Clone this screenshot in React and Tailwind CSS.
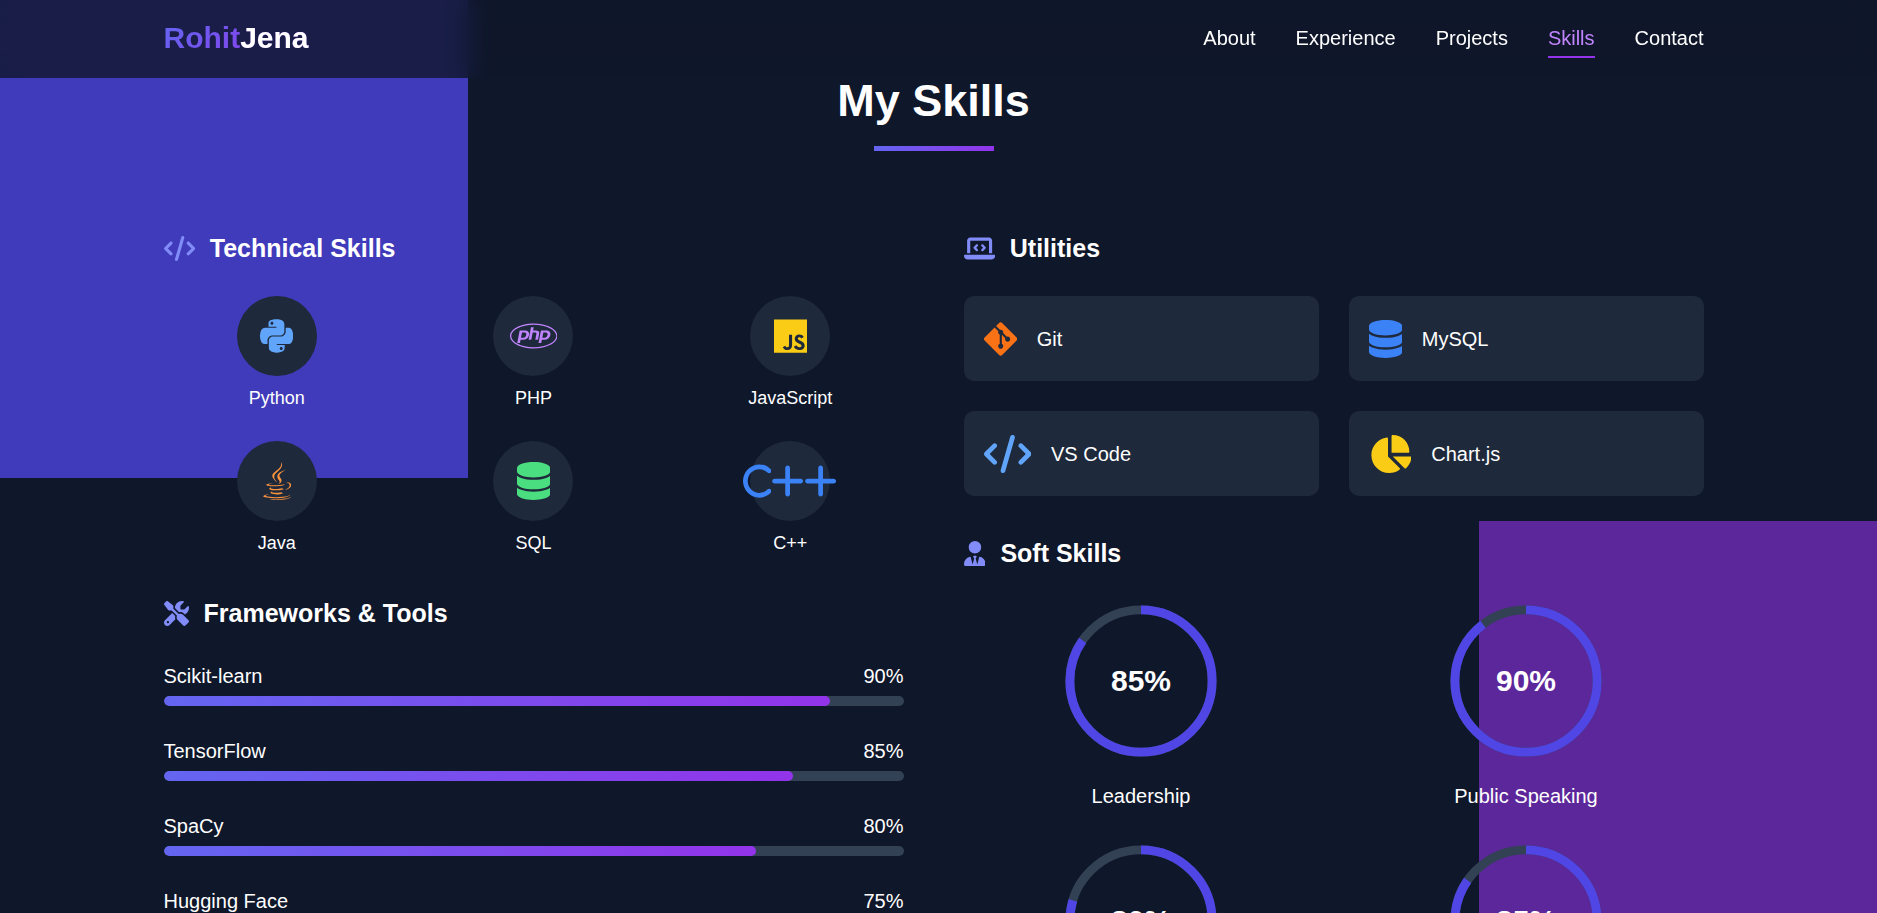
import {
  FaC,
  FaChartPie,
  FaCode,
  FaDatabase,
  FaGitAlt,
  FaJava,
  FaJs,
  FaLaptopCode,
  FaPhp,
  FaPlus,
  FaPython,
  FaScrewdriverWrench,
  FaUserTie,
} from "react-icons/fa6";

const links = ["About", "Experience", "Projects", "Skills", "Contact"];

// Each glyph keeps the proportions of its own view box.
const languages = [
  { name: "Python", icons: [[FaPython, "aspect-[7/8]"]], color: "text-[#60a5fa]" },
  { name: "PHP", icons: [[FaPhp, "aspect-[5/4]"]], color: "text-[#c084fc]" },
  { name: "JavaScript", icons: [[FaJs, "aspect-[7/8]"]], color: "text-[#facc15]" },
  { name: "Java", icons: [[FaJava, "aspect-[3/4]"]], color: "text-[#fb923c]" },
  { name: "SQL", icons: [[FaDatabase, "aspect-[7/8]"]], color: "text-[#4ade80]" },
  {
    name: "C++",
    icons: [
      [FaC, "aspect-[3/4]"],
      [FaPlus, "aspect-[7/8]"],
      [FaPlus, "aspect-[7/8]"],
    ],
    color: "text-[#3b82f6]",
  },
];

const frameworks = [
  { name: "Scikit-learn", value: 90 },
  { name: "TensorFlow", value: 85 },
  { name: "SpaCy", value: 80 },
  { name: "Hugging Face", value: 75 },
];

const utilities = [
  { name: "Git", Icon: FaGitAlt, look: "aspect-[7/8] text-[#f97316]" },
  { name: "MySQL", Icon: FaDatabase, look: "aspect-[7/8] text-[#3b82f6]" },
  { name: "VS Code", Icon: FaCode, look: "aspect-[5/4] text-[#60a5fa]" },
  { name: "Chart.js", Icon: FaChartPie, look: "aspect-[9/8] text-[#facc15]" },
];

const softSkills = [
  { name: "Leadership", value: 85 },
  { name: "Public Speaking", value: 90 },
  { name: "", value: 80 },
  { name: "", value: 85 },
];

function Header() {
  return (
    <header className="fixed inset-x-0 top-0 z-20 bg-[#0f172a]/80 pr-[10px] backdrop-blur-md">
      <nav className="mx-auto flex max-w-[1600px] items-center justify-between px-[30px] pt-[18px] pb-5">
        <a
          href="#home"
          className="bg-[linear-gradient(135deg,#6366f1,#9333ea)] bg-clip-text text-[30px] leading-10 font-bold text-transparent"
        >
          Rohit<span className="text-white">Jena</span>
        </a>
        <ul className="flex gap-10">
          {links.map((link) => (
            <li key={link}>
              <a
                href={`#${link.toLowerCase()}`}
                className={
                  link === "Skills"
                    ? "relative block text-[#c084fc] after:absolute after:inset-x-0 after:-bottom-[5px] after:h-[2px] after:bg-[#9333ea]"
                    : "block"
                }
              >
                {link}
              </a>
            </li>
          ))}
        </ul>
      </nav>
    </header>
  );
}

function GroupTitle({ Icon, shape, children }) {
  return (
    <h3 className="mb-[30px] flex items-center gap-[15px] text-[25px] leading-[35px] font-bold">
      <Icon className={`h-[25px] w-auto shrink-0 text-[#818cf8] ${shape}`} />
      {children}
    </h3>
  );
}

function Language({ name, icons, color }) {
  return (
    <li className="flex flex-col items-center">
      <div className={`mb-[10px] flex size-20 items-center justify-center rounded-full bg-[#1e293b] ${color}`}>
        {icons.map(([Icon, shape], i) => (
          <Icon key={i} className={`h-[38px] w-auto shrink-0 ${shape}`} />
        ))}
      </div>
      <span className="text-[18px] leading-[25px]">{name}</span>
    </li>
  );
}

function Framework({ name, value }) {
  return (
    <li>
      <div className="mb-[5px] flex justify-between">
        <span>{name}</span>
        <span>{value}%</span>
      </div>
      <div className="h-[10px] overflow-hidden rounded-[5px] bg-[#334155]">
        <div
          className="h-full rounded-[5px] bg-[linear-gradient(135deg,#6366f1,#9333ea)]"
          style={{ width: `${value}%` }}
        />
      </div>
    </li>
  );
}

function Utility({ name, Icon, look }) {
  return (
    <li className="flex h-[85px] items-center gap-5 rounded-[10px] bg-[#1e293b] px-5">
      <Icon className={`h-[38px] w-auto shrink-0 ${look}`} />
      <span>{name}</span>
    </li>
  );
}

function Ring({ name, value }) {
  return (
    <li className="flex flex-col items-center">
      <div className="relative size-40">
        <svg viewBox="0 0 36 36" className="size-full -rotate-90" fill="none" strokeWidth="2">
          <circle cx="18" cy="18" r="16" stroke="#334155" />
          <circle cx="18" cy="18" r="16" stroke="#4f46e5" strokeDasharray={`${value} 100.53`} />
        </svg>
        <span className="absolute inset-0 flex items-center justify-center text-[30px] leading-10 font-bold">
          {value}%
        </span>
      </div>
      {name && <span className="mt-5">{name}</span>}
    </li>
  );
}

export default function App() {
  return (
    <div className="relative h-screen overflow-hidden bg-[#0f172a] font-['Liberation_Sans',Arial,sans-serif] text-[20px] leading-[30px] text-white">
      <div className="absolute top-0 left-0 h-[478px] w-[468px] bg-[#403bba]" />
      <div className="absolute top-[521px] right-0 bottom-0 w-[398px] bg-[#5c279a]" />

      <Header />

      <main className="relative pt-[76px] pr-[10px]">
        <section id="skills" className="mx-auto max-w-[1600px] px-[30px]">
          <div className="mb-20 flex flex-col items-center">
            <h2 className="mb-5 text-[45px] leading-[50px] font-bold">My Skills</h2>
            <div className="h-[5px] w-[120px] bg-[linear-gradient(135deg,#6366f1,#9333ea)]" />
          </div>

          <div className="grid grid-cols-2 gap-[60px]">
            <div>
              <GroupTitle Icon={FaCode} shape="aspect-[5/4]">
                Technical Skills
              </GroupTitle>
              <ul className="mb-10 grid grid-cols-3 gap-[30px]">
                {languages.map((item) => (
                  <Language key={item.name} {...item} />
                ))}
              </ul>
              <GroupTitle Icon={FaScrewdriverWrench} shape="aspect-square">
                Frameworks &amp; Tools
              </GroupTitle>
              <ul className="flex flex-col gap-[30px]">
                {frameworks.map((item) => (
                  <Framework key={item.name} {...item} />
                ))}
              </ul>
            </div>

            <div>
              <GroupTitle Icon={FaLaptopCode} shape="aspect-[5/4]">
                Utilities
              </GroupTitle>
              <ul className="mb-10 grid grid-cols-2 gap-[30px]">
                {utilities.map((item) => (
                  <Utility key={item.name} {...item} />
                ))}
              </ul>
              <GroupTitle Icon={FaUserTie} shape="aspect-[7/8]">
                Soft Skills
              </GroupTitle>
              <ul className="grid grid-cols-2 gap-[30px]">
                {softSkills.map((item, i) => (
                  <Ring key={i} {...item} />
                ))}
              </ul>
            </div>
          </div>
        </section>
      </main>
    </div>
  );
}
